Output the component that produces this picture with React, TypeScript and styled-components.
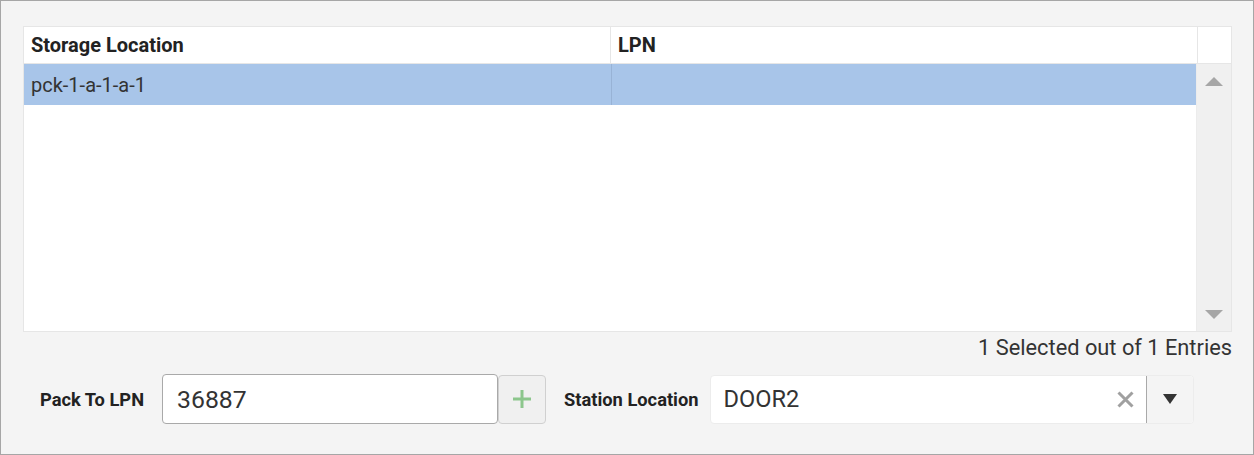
import React from "react";
import styled, { createGlobalStyle } from "styled-components";

const GlobalStyle = createGlobalStyle`
  body {
    margin: 0;
    background: #ffffff;
    font-family: Roboto, "Liberation Sans", sans-serif;
  }
  * { box-sizing: border-box; }
`;

const Panel = styled.div`
  width: 1254px;
  height: 455px;
  background: #f4f4f4;
  border: 1px solid #a6a6a6;
  padding: 25px 22px 0 22px;
  display: flex;
  flex-direction: column;
`;

const Table = styled.div`
  width: 1209px;
  height: 306px;
  border: 1px solid #e6e6e6;
  background: #ffffff;
  display: flex;
  flex-direction: column;
`;

const HeaderRow = styled.div`
  display: grid;
  grid-template-columns: 587px 1fr 33px;
  height: 37px;
  border-bottom: 1px solid #e6e6e6;
`;

const HeaderCell = styled.div<{ $last?: boolean }>`
  display: flex;
  align-items: center;
  padding-left: 7px;
  font-size: 20px;
  font-weight: 700;
  color: #222;
  border-right: ${(p) => (p.$last ? "none" : "1px solid #e6e6e6")};
`;

const Body = styled.div`
  flex: 1;
  display: flex;
`;

const Rows = styled.div`
  flex: 1;
`;

const Row = styled.div<{ $selected?: boolean }>`
  display: grid;
  grid-template-columns: 587px 1fr;
  height: 41px;
  background: ${(p) => (p.$selected ? "#a8c5e9" : "#ffffff")};
`;

const Cell = styled.div`
  display: flex;
  align-items: center;
  padding-left: 7px;
  font-size: 20px;
  color: #333;
  & + & {
    border-left: 1px solid #98b3d6;
  }
`;

const Scrollbar = styled.div`
  width: 35px;
  background: #f0f0f0;
  border-left: 1px solid #ececec;
  display: flex;
  flex-direction: column;
  justify-content: space-between;
  align-items: center;
  padding: 13px 0 12px 0;
`;

const Arrow = styled.div<{ $down?: boolean }>`
  width: 0;
  height: 0;
  border-left: 9px solid transparent;
  border-right: 9px solid transparent;
  ${(p) =>
    p.$down
      ? "border-top: 9px solid #a6a6a6;"
      : "border-bottom: 9px solid #a6a6a6;"}
`;

const Summary = styled.div`
  width: 1209px;
  text-align: right;
  font-size: 21.8px;
  color: #333;
  margin-top: 3px;
  line-height: 26px;
`;

const FormRow = styled.div`
  display: flex;
  align-items: center;
  margin-top: 13px;
  padding-left: 17px;
`;

const Label = styled.label`
  font-size: 18.3px;
  font-weight: 700;
  color: #222;
  margin-right: 18px;
`;

const TextInput = styled.div`
  width: 336px;
  height: 50px;
  background: #fff;
  border: 1px solid #a9a9a9;
  border-radius: 4px;
  display: flex;
  align-items: center;
  padding-left: 14px;
  font-size: 24.8px;
  color: #333;
`;

const AddButton = styled.div`
  width: 48px;
  height: 49px;
  background: #f0f0f0;
  border: 1px solid #d0d0d0;
  border-radius: 4px;
  display: flex;
  align-items: center;
  justify-content: center;
  margin-right: 18px;
`;

const Select = styled.div`
  width: 484px;
  height: 49px;
  background: #fff;
  border: 1px solid #ececec;
  border-radius: 4px;
  display: flex;
  align-items: center;
  margin-left: -7px;
`;

const SelectValue = styled.div`
  flex: 1;
  padding-left: 13px;
  font-size: 23.6px;
  color: #333;
`;

const Clear = styled.div`
  width: 40px;
  display: flex;
  justify-content: center;
`;

const Toggle = styled.div`
  width: 47px;
  align-self: stretch;
  background: #f4f4f4;
  border-left: 1px solid #a9a9a9;
  border-radius: 0 4px 4px 0;
  display: flex;
  align-items: center;
  justify-content: center;
`;

const Caret = styled.div`
  width: 0;
  height: 0;
  border-left: 7px solid transparent;
  border-right: 7px solid transparent;
  border-top: 10px solid #333;
`;

export default function App() {
  return (
    <>
      <GlobalStyle />
      <Panel>
        <Table>
          <HeaderRow>
            <HeaderCell>Storage Location</HeaderCell>
            <HeaderCell>LPN</HeaderCell>
            <HeaderCell $last />
          </HeaderRow>
          <Body>
            <Rows>
              <Row $selected>
                <Cell>pck-1-a-1-a-1</Cell>
                <Cell />
              </Row>
            </Rows>
            <Scrollbar>
              <Arrow />
              <Arrow $down />
            </Scrollbar>
          </Body>
        </Table>
        <Summary>1 Selected out of 1 Entries</Summary>
        <FormRow>
          <Label>Pack To LPN</Label>
          <TextInput>36887</TextInput>
          <AddButton>
            <svg width="20" height="20" viewBox="0 0 20 20">
              <path d="M10 1v18M1 10h18" stroke="#8cc68c" strokeWidth="3" />
            </svg>
          </AddButton>
          <Label>Station Location</Label>
          <Select>
            <SelectValue>DOOR2</SelectValue>
            <Clear>
              <svg width="17" height="17" viewBox="0 0 17 17">
                <path d="M1.5 1.5l14 14M15.5 1.5l-14 14" stroke="#a0a0a0" strokeWidth="3" />
              </svg>
            </Clear>
            <Toggle>
              <Caret />
            </Toggle>
          </Select>
        </FormRow>
      </Panel>
    </>
  );
}
